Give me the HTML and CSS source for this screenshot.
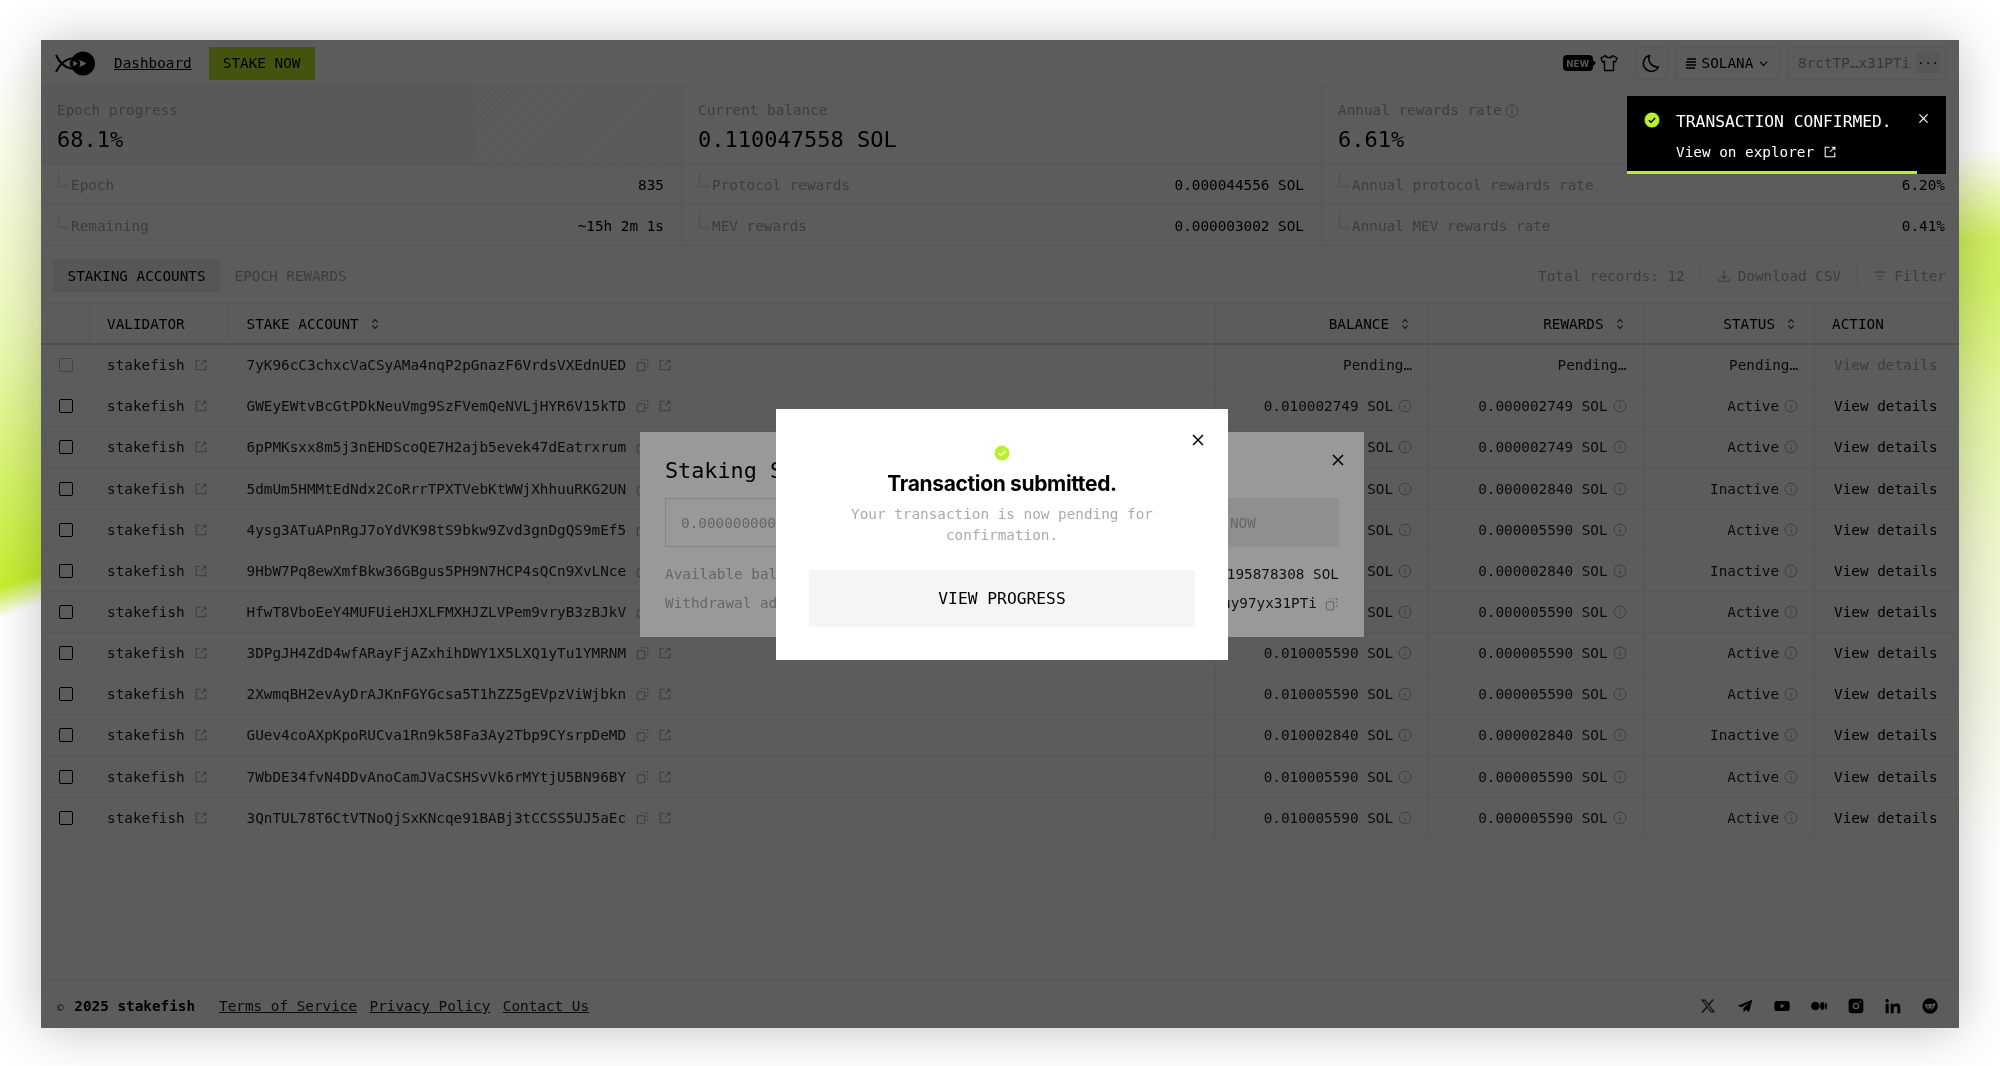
FILE: index.html
```html
<!DOCTYPE html>
<html lang="en">
<head>
<meta charset="utf-8">
<title>stakefish dashboard</title>
<link rel="stylesheet" href="styles.css">
</head>
<body>
<svg class="defs" width="0" height="0" aria-hidden="true">
  <symbol id="ext" viewBox="0 0 16 16"><path d="M7.500 2.500H2.500v11h11V8.500M10 2.500h3.500V6M13.500 2.500 8 8" fill="none" stroke="currentColor" stroke-width="1.200"/></symbol>
  <symbol id="copy" viewBox="0 0 16 16"><rect x="1.500" y="5.500" width="8.500" height="9" rx="1.500" fill="none" stroke="currentColor" stroke-width="1.200"/><path d="M5 2h1.500M8.500 2H10M12 2h1.500v1.500M13.500 5.500V7M13.500 9v1.500H12.500" fill="none" stroke="currentColor" stroke-width="1.200"/></symbol>
  <symbol id="info" viewBox="0 0 16 16"><circle cx="8" cy="8" r="6.700" fill="none" stroke="currentColor" stroke-width="1.100"/><path d="M8 7v4.500M8 4.500v1.200" fill="none" stroke="currentColor" stroke-width="1.100"/></symbol>
  <symbol id="sort" viewBox="0 0 16 16"><path d="M5 6.200 8 3l3 3.200M5 9.800 8 13l3-3.200" fill="none" stroke="currentColor" stroke-width="1.200"/></symbol>
  <symbol id="sub" viewBox="0 0 12 20"><path d="M1.500 1v14.500H10M7.500 12.500l3 3-3 3" fill="none" stroke="currentColor" stroke-width="1"/></symbol>
  <symbol id="close" viewBox="0 0 16 16"><path d="M3 3l10 10M13 3 3 13" fill="none" stroke="currentColor" stroke-width="1.500"/></symbol>
  <symbol id="check" viewBox="0 0 16 16"><circle cx="8" cy="8" r="7.500" fill="#b8f12c"/><path d="M4.800 8.200 7 10.300l4.200-4.400" fill="none" stroke="currentColor" stroke-width="1.400"/></symbol>
</svg>
<div class="stage">
  <div class="window">
    <header class="topbar">
      <svg class="logo" viewBox="0 0 40 25" aria-label="stakefish"><circle cx="28" cy="12.500" r="12"/><path d="M1 21C8 6 21 3.500 33 12.500 21 21.500 8 19 1 4" fill="#fff" stroke="#000" stroke-width="2"/><circle cx="20" cy="12.500" r="5.300"/><path d="M18.300 9.500l4.500 3-4.500 3z" fill="#fff"/></svg>
      <a class="navlink">Dashboard</a>
      <button class="stake">STAKE NOW</button>
      <span class="spring"></span>
      <span class="newtag">NEW</span>
      <svg class="shirt" viewBox="0 0 18 18"><path d="M5.500 1.500 1 4l1.500 4 2-.7V16.500h9V7.300l2 .7L17 4l-4.500-2.500C11.800 4.300 6.200 4.300 5.500 1.500z" fill="none" stroke="#000" stroke-width="1.400" stroke-linejoin="round"/></svg>
      <span class="box moon"><svg viewBox="0 0 20 20" width="20" height="20"><path d="M8.500 2.500A8 8 0 1 0 17.500 14 8.500 8.500 0 0 1 8.500 2.500z" fill="none" stroke="#000" stroke-width="1.500" stroke-linejoin="round"/></svg></span>
      <span class="box network"><svg viewBox="0 0 12 12" width="12" height="12"><path d="M2 2h9M1 5h10M1 8h10M1 11h9" stroke="#000" stroke-width="1.700"/></svg>SOLANA<svg viewBox="0 0 12 12" width="11" height="11"><path d="M2 4l4 4 4-4" fill="none" stroke="#000" stroke-width="1.300"/></svg></span>
      <span class="box wallet"><span class="addr">8rctTP…x31PTi</span><span class="dots">···</span></span>
    </header>

    <section class="stats">
      <div class="stat progress"><div class="hatch"></div><div class="lab">Epoch progress</div><div class="big">68.1%</div></div>
      <div class="stat"><div class="lab">Current balance</div><div class="big">0.110047558 SOL</div></div>
      <div class="stat"><div class="lab">Annual rewards rate<svg class="ic14 labinfo"><use href="#info"/></svg></div><div class="big">6.61%</div></div>

      <div class="sub"><svg class="subic"><use href="#sub"/></svg><span class="sublab">Epoch</span><span>835</span></div>
      <div class="sub"><svg class="subic"><use href="#sub"/></svg><span class="sublab">Protocol rewards</span><span>0.000044556 SOL</span></div>
      <div class="sub last"><svg class="subic"><use href="#sub"/></svg><span class="sublab">Annual protocol rewards rate</span><span>6.20%</span></div>

      <div class="sub"><svg class="subic"><use href="#sub"/></svg><span class="sublab">Remaining</span><span>~15h 2m 1s</span></div>
      <div class="sub"><svg class="subic"><use href="#sub"/></svg><span class="sublab">MEV rewards</span><span>0.000003002 SOL</span></div>
      <div class="sub last"><svg class="subic"><use href="#sub"/></svg><span class="sublab">Annual MEV rewards rate</span><span>0.41%</span></div>
    </section>

    <section class="toolbar">
      <span class="tab on">STAKING ACCOUNTS</span>
      <span class="tab">EPOCH REWARDS</span>
      <span class="spring"></span>
      <span class="tool">Total records: 12</span>
      <span class="tool sep"><svg class="ic14" viewBox="0 0 16 16"><path d="M8 1.500v9M4.500 7.500 8 11l3.500-3.500M2 11v3h12v-3" fill="none" stroke="currentColor" stroke-width="1.300"/></svg>Download CSV</span>
      <span class="tool sep"><svg class="ic14" viewBox="0 0 16 16"><path d="M2 3.500h12M4 8h8M6 12.500h4" fill="none" stroke="currentColor" stroke-width="1.300"/></svg>Filter</span>
    </section>

    <section class="table">
      <div class="row head">
        <div class="c"></div>
        <div class="c">VALIDATOR</div>
        <div class="c">STAKE ACCOUNT <svg class="ic14 sorticon"><use href="#sort"/></svg></div>
        <div class="c r">BALANCE <svg class="ic14 sorticon"><use href="#sort"/></svg></div>
        <div class="c r">REWARDS <svg class="ic14 sorticon"><use href="#sort"/></svg></div>
        <div class="c r">STATUS <svg class="ic14 sorticon"><use href="#sort"/></svg></div>
        <div class="c">ACTION</div>
      </div>
      <div class="row pending">
        <div class="c"><span class="cb"></span></div>
        <div class="c"><span class="val">stakefish</span><svg class="ic14 faint"><use href="#ext"/></svg></div>
        <div class="c"><span class="acct">7yK96cC3chxcVaCSyAMa4nqP2pGnazF6VrdsVXEdnUED</span><svg class="ic14 faint"><use href="#copy"/></svg><svg class="ic14 faint"><use href="#ext"/></svg></div>
        <div class="c r pend">Pending…</div>
        <div class="c r pend">Pending…</div>
        <div class="c r pend">Pending…</div>
        <div class="c act off">View details</div>
      </div>
      <div class="row">
        <div class="c"><span class="cb"></span></div>
        <div class="c"><span class="val">stakefish</span><svg class="ic14 faint"><use href="#ext"/></svg></div>
        <div class="c"><span class="acct">GWEyEWtvBcGtPDkNeuVmg9SzFVemQeNVLjHYR6V15kTD</span><svg class="ic14 faint"><use href="#copy"/></svg><svg class="ic14 faint"><use href="#ext"/></svg></div>
        <div class="c r">0.010002749 SOL<svg class="ic14 faint"><use href="#info"/></svg></div>
        <div class="c r">0.000002749 SOL<svg class="ic14 faint"><use href="#info"/></svg></div>
        <div class="c r">Active<svg class="ic14 faint"><use href="#info"/></svg></div>
        <div class="c act">View details</div>
      </div>
      <div class="row">
        <div class="c"><span class="cb"></span></div>
        <div class="c"><span class="val">stakefish</span><svg class="ic14 faint"><use href="#ext"/></svg></div>
        <div class="c"><span class="acct">6pPMKsxx8m5j3nEHDScoQE7H2ajb5evek47dEatrxrum</span><svg class="ic14 faint"><use href="#copy"/></svg><svg class="ic14 faint"><use href="#ext"/></svg></div>
        <div class="c r">0.010002749 SOL<svg class="ic14 faint"><use href="#info"/></svg></div>
        <div class="c r">0.000002749 SOL<svg class="ic14 faint"><use href="#info"/></svg></div>
        <div class="c r">Active<svg class="ic14 faint"><use href="#info"/></svg></div>
        <div class="c act">View details</div>
      </div>
      <div class="row">
        <div class="c"><span class="cb"></span></div>
        <div class="c"><span class="val">stakefish</span><svg class="ic14 faint"><use href="#ext"/></svg></div>
        <div class="c"><span class="acct">5dmUm5HMMtEdNdx2CoRrrTPXTVebKtWWjXhhuuRKG2UN</span><svg class="ic14 faint"><use href="#copy"/></svg><svg class="ic14 faint"><use href="#ext"/></svg></div>
        <div class="c r">0.010002840 SOL<svg class="ic14 faint"><use href="#info"/></svg></div>
        <div class="c r">0.000002840 SOL<svg class="ic14 faint"><use href="#info"/></svg></div>
        <div class="c r">Inactive<svg class="ic14 faint"><use href="#info"/></svg></div>
        <div class="c act">View details</div>
      </div>
      <div class="row">
        <div class="c"><span class="cb"></span></div>
        <div class="c"><span class="val">stakefish</span><svg class="ic14 faint"><use href="#ext"/></svg></div>
        <div class="c"><span class="acct">4ysg3ATuAPnRgJ7oYdVK98tS9bkw9Zvd3gnDgQS9mEf5</span><svg class="ic14 faint"><use href="#copy"/></svg><svg class="ic14 faint"><use href="#ext"/></svg></div>
        <div class="c r">0.010005590 SOL<svg class="ic14 faint"><use href="#info"/></svg></div>
        <div class="c r">0.000005590 SOL<svg class="ic14 faint"><use href="#info"/></svg></div>
        <div class="c r">Active<svg class="ic14 faint"><use href="#info"/></svg></div>
        <div class="c act">View details</div>
      </div>
      <div class="row">
        <div class="c"><span class="cb"></span></div>
        <div class="c"><span class="val">stakefish</span><svg class="ic14 faint"><use href="#ext"/></svg></div>
        <div class="c"><span class="acct">9HbW7Pq8ewXmfBkw36GBgus5PH9N7HCP4sQCn9XvLNce</span><svg class="ic14 faint"><use href="#copy"/></svg><svg class="ic14 faint"><use href="#ext"/></svg></div>
        <div class="c r">0.010002840 SOL<svg class="ic14 faint"><use href="#info"/></svg></div>
        <div class="c r">0.000002840 SOL<svg class="ic14 faint"><use href="#info"/></svg></div>
        <div class="c r">Inactive<svg class="ic14 faint"><use href="#info"/></svg></div>
        <div class="c act">View details</div>
      </div>
      <div class="row">
        <div class="c"><span class="cb"></span></div>
        <div class="c"><span class="val">stakefish</span><svg class="ic14 faint"><use href="#ext"/></svg></div>
        <div class="c"><span class="acct">HfwT8VboEeY4MUFUieHJXLFMXHJZLVPem9vryB3zBJkV</span><svg class="ic14 faint"><use href="#copy"/></svg><svg class="ic14 faint"><use href="#ext"/></svg></div>
        <div class="c r">0.010005590 SOL<svg class="ic14 faint"><use href="#info"/></svg></div>
        <div class="c r">0.000005590 SOL<svg class="ic14 faint"><use href="#info"/></svg></div>
        <div class="c r">Active<svg class="ic14 faint"><use href="#info"/></svg></div>
        <div class="c act">View details</div>
      </div>
      <div class="row">
        <div class="c"><span class="cb"></span></div>
        <div class="c"><span class="val">stakefish</span><svg class="ic14 faint"><use href="#ext"/></svg></div>
        <div class="c"><span class="acct">3DPgJH4ZdD4wfARayFjAZxhihDWY1X5LXQ1yTu1YMRNM</span><svg class="ic14 faint"><use href="#copy"/></svg><svg class="ic14 faint"><use href="#ext"/></svg></div>
        <div class="c r">0.010005590 SOL<svg class="ic14 faint"><use href="#info"/></svg></div>
        <div class="c r">0.000005590 SOL<svg class="ic14 faint"><use href="#info"/></svg></div>
        <div class="c r">Active<svg class="ic14 faint"><use href="#info"/></svg></div>
        <div class="c act">View details</div>
      </div>
      <div class="row">
        <div class="c"><span class="cb"></span></div>
        <div class="c"><span class="val">stakefish</span><svg class="ic14 faint"><use href="#ext"/></svg></div>
        <div class="c"><span class="acct">2XwmqBH2evAyDrAJKnFGYGcsa5T1hZZ5gEVpzViWjbkn</span><svg class="ic14 faint"><use href="#copy"/></svg><svg class="ic14 faint"><use href="#ext"/></svg></div>
        <div class="c r">0.010005590 SOL<svg class="ic14 faint"><use href="#info"/></svg></div>
        <div class="c r">0.000005590 SOL<svg class="ic14 faint"><use href="#info"/></svg></div>
        <div class="c r">Active<svg class="ic14 faint"><use href="#info"/></svg></div>
        <div class="c act">View details</div>
      </div>
      <div class="row">
        <div class="c"><span class="cb"></span></div>
        <div class="c"><span class="val">stakefish</span><svg class="ic14 faint"><use href="#ext"/></svg></div>
        <div class="c"><span class="acct">GUev4coAXpKpoRUCva1Rn9k58Fa3Ay2Tbp9CYsrpDeMD</span><svg class="ic14 faint"><use href="#copy"/></svg><svg class="ic14 faint"><use href="#ext"/></svg></div>
        <div class="c r">0.010002840 SOL<svg class="ic14 faint"><use href="#info"/></svg></div>
        <div class="c r">0.000002840 SOL<svg class="ic14 faint"><use href="#info"/></svg></div>
        <div class="c r">Inactive<svg class="ic14 faint"><use href="#info"/></svg></div>
        <div class="c act">View details</div>
      </div>
      <div class="row">
        <div class="c"><span class="cb"></span></div>
        <div class="c"><span class="val">stakefish</span><svg class="ic14 faint"><use href="#ext"/></svg></div>
        <div class="c"><span class="acct">7WbDE34fvN4DDvAnoCamJVaCSHSvVk6rMYtjU5BN96BY</span><svg class="ic14 faint"><use href="#copy"/></svg><svg class="ic14 faint"><use href="#ext"/></svg></div>
        <div class="c r">0.010005590 SOL<svg class="ic14 faint"><use href="#info"/></svg></div>
        <div class="c r">0.000005590 SOL<svg class="ic14 faint"><use href="#info"/></svg></div>
        <div class="c r">Active<svg class="ic14 faint"><use href="#info"/></svg></div>
        <div class="c act">View details</div>
      </div>
      <div class="row">
        <div class="c"><span class="cb"></span></div>
        <div class="c"><span class="val">stakefish</span><svg class="ic14 faint"><use href="#ext"/></svg></div>
        <div class="c"><span class="acct">3QnTUL78T6CtVTNoQjSxKNcqe91BABj3tCCSS5UJ5aEc</span><svg class="ic14 faint"><use href="#copy"/></svg><svg class="ic14 faint"><use href="#ext"/></svg></div>
        <div class="c r">0.010005590 SOL<svg class="ic14 faint"><use href="#info"/></svg></div>
        <div class="c r">0.000005590 SOL<svg class="ic14 faint"><use href="#info"/></svg></div>
        <div class="c r">Active<svg class="ic14 faint"><use href="#info"/></svg></div>
        <div class="c act">View details</div>
      </div>
    </section>

    <footer class="foot">
      <span class="copyr"><span class="cmark">©</span> 2025 stakefish</span>
      <a class="flink first">Terms of Service</a>
      <a class="flink">Privacy Policy</a>
      <a class="flink">Contact Us</a>
      <span class="spring"></span>
      <div class="social">
        <svg class="xlogo" viewBox="0 0 24 24"><path d="M18.244 2.250h3.308l-7.227 8.260 8.502 11.240H16.170l-5.214-6.817L4.990 21.750H1.680l7.730-8.835L1.254 2.250H8.080l4.713 6.231zm-1.161 17.520h1.833L7.084 4.126H5.117z"/></svg>
        <svg viewBox="0 0 24 24"><path d="M23 2.500 1 11.500l6 2.500 11-7.500-8.500 9 .5 6 3.500-4 4.500 3.500z"/></svg>
        <svg viewBox="0 0 24 24"><path d="M4 4.500h16a3.500 3.500 0 0 1 3.500 3.500v8a3.500 3.500 0 0 1-3.500 3.500H4A3.500 3.500 0 0 1 .5 16V8A3.500 3.500 0 0 1 4 4.500zM10 8.500v7l6-3.500z" fill-rule="evenodd"/></svg>
        <svg viewBox="0 0 24 24"><circle cx="6.500" cy="12" r="6.500"/><ellipse cx="17" cy="12" rx="3.200" ry="6"/><ellipse cx="22.500" cy="12" rx="1.300" ry="5.400"/></svg>
        <svg viewBox="0 0 24 24"><path d="M6 1h12a5 5 0 0 1 5 5v12a5 5 0 0 1-5 5H6a5 5 0 0 1-5-5V6a5 5 0 0 1 5-5zM12 7a5 5 0 1 0 0 10 5 5 0 0 0 0-10zm0 2a3 3 0 1 1 0 6 3 3 0 0 1 0-6zm6.500-4.500a1.300 1.300 0 1 0 0 2.600 1.300 1.300 0 0 0 0-2.600z" fill-rule="evenodd"/></svg>
        <svg viewBox="0 0 24 24"><path d="M1 8.500h4.500V23H1zM3.250 1.500a2.600 2.600 0 1 1 0 5.200 2.600 2.600 0 0 1 0-5.200zM8.500 8.500h4.300v2c.7-1.300 2.300-2.400 4.700-2.400 4.600 0 5.500 3 5.500 7V23h-4.500v-7c0-1.700 0-3.800-2.300-3.800S13 14 13 15.900V23H8.500z"/></svg>
        <svg viewBox="0 0 24 24"><path d="M12 .5a11.500 11.500 0 1 0 0 23 11.500 11.500 0 0 0 0-23zM5 10.500a2 2 0 0 1 3-.8C9.200 9 10.500 8.700 12 8.700s2.800.3 4 1a2 2 0 1 1 3 1.700c.1 3.500-3 6-7 6s-7.100-2.500-7-6a2 2 0 0 1-2-.9zM9 11.500a1.300 1.300 0 1 0 0 2.600 1.300 1.300 0 0 0 0-2.600zm6 0a1.300 1.300 0 1 0 0 2.600 1.300 1.300 0 0 0 0-2.600zM8.800 15c1.800 1.400 4.600 1.400 6.400 0z" fill-rule="evenodd"/></svg>
      </div>
    </footer>

    <div class="scrim">
      <div class="dialog">
        <div class="dhead"><span class="dtitle">Staking SOL</span><svg class="x dx"><use href="#close"/></svg></div>
        <div class="dinput"><span class="ph">0.000000000</span><span class="dbtn">STAKE NOW</span></div>
        <div class="dline"><span>Available balance</span><span>0.195878308 SOL</span></div>
        <div class="dline"><span>Withdrawal address</span><span class="dadr">8rctTP…uy97yx31PTi<svg class="ic14 faint"><use href="#copy"/></svg></span></div>
      </div>
    </div>

    <div class="scrim">
      <div class="confirm">
        <svg class="x cx"><use href="#close"/></svg>
        <svg class="okmark"><use href="#check"/></svg>
        <h2 class="ctitle">Transaction submitted.</h2>
        <p class="ctext">Your transaction is now pending for confirmation.</p>
        <button class="cbtn">VIEW PROGRESS</button>
      </div>
    </div>

    <div class="toast">
      <svg class="tcheck"><use href="#check"/></svg>
      <div class="tbody">
        <div class="ttitle">TRANSACTION CONFIRMED.</div>
        <div class="tlink">View on explorer <svg class="ic14"><use href="#ext"/></svg></div>
      </div>
      <svg class="tclose"><use href="#close"/></svg>
      <div class="tbar"></div>
    </div>
  </div>
</div>
</body>
</html>
```

FILE: styles.css
```css
* { box-sizing: border-box; }
html, body { margin: 0; height: 1066px; overflow: hidden; }
body {
  background-color: #fff;
  background-image:
    linear-gradient(159.5deg, rgba(198,239,48,0) 60px, rgba(198,239,48,.35) 320px, #c6ef30 551px, rgba(198,239,48,0) 579px),
    linear-gradient(180deg, rgba(210,240,96,0) 150px, #d2f060 240px, #d4f268 290px, #e4f8a0 400px, #eff8cf 550px, #f5f8e5 700px, rgba(245,248,229,0) 850px);
  background-size: 60px 700px, 60px 1066px;
  background-position: 0 0, 100% 0;
  background-repeat: no-repeat;
  font-family: "DejaVu Sans Mono", monospace;
  font-size: 14.33px;
  color: #000;
}
.defs { display: block; height: 0; }
.stage {
  padding: 40px 41px 38px; height: 1066px;
  filter: drop-shadow(0 2px 26px rgba(0,0,0,.24));
}
.window {
  position: relative;
  height: 988px;
  background: #fff;
  display: flex;
  flex-direction: column;
  overflow: hidden;
}

.spring { flex: 1; }
.ic14 { width: 14px; height: 14px; flex: none; vertical-align: -2px; }
.faint { color: #a8a8a8; }

/* top bar */
.topbar {
  height: 47px; flex: none;
  display: flex; align-items: center;
  padding: 0 13px 0 14px;
  border-bottom: 1px solid #eee;
}
.logo { width: 40px; height: 25px; flex: none; }
.navlink { margin-left: 19px; text-decoration: underline; }
.stake {
  margin-left: 17px; width: 106px; height: 33px;
  background: #bdea2a; border: 0; padding: 0;
  font: inherit; color: #000;
}
.newtag {
  position: relative;
  background: #000; color: #fff; border-radius: 4px;
  width: 30px; height: 16px;
  font-family: Inter, sans-serif; font-weight: 700; font-size: 9px;
  display: flex; align-items: center; justify-content: center; letter-spacing: .5px;
}
.newtag::after {
  content: ""; position: absolute; right: -3px; top: 5px;
  border-left: 3px solid #000; border-top: 3px solid transparent; border-bottom: 3px solid transparent;
}
.shirt { width: 18px; height: 18px; margin-left: 7px; }
.box {
  height: 33px; border: 1px solid #eee;
  display: flex; align-items: center; justify-content: center;
}
.moon { width: 33px; margin-left: 16px; }
.network { width: 104px; margin-left: 8px; gap: 5px; }
.wallet { width: 159px; margin-left: 8px; padding: 0 5px 0 10px; justify-content: space-between; }
.addr { color: #999; }
.dots { width: 24px; height: 20px; background: #f3f3f3; display: flex; align-items: center; justify-content: center; font-size: 12px; }

/* stats */
.stats {
  display: grid; flex: none;
  grid-template-columns: 641px 640px 1fr;
  grid-template-rows: 78px 40px 41px;
}
.stat {
  position: relative; padding: 13px 16px 0;
  border-right: 1px solid #eee; border-bottom: 1px solid #eee;
}
.stat:nth-child(3) { border-right: 0; }
.stat.progress { background: #f8f8f8; }
.hatch {
  position: absolute; left: 435px; top: 0; bottom: 0; right: 0;
  background: repeating-linear-gradient(135deg, #f2f2f2 0 1px, #fff 1px 4px);
}
.lab { position: relative; color: #aaa; line-height: 21px; display: flex; align-items: center; gap: 3px; }
.labinfo { color: #aaa; }
.big { position: relative; font-size: 22px; line-height: 28px; margin-top: 5px; }
.sub {
  display: flex; align-items: center;
  padding: 1px 17px 0 16px;
  border-right: 1px solid #eee; border-bottom: 1px solid #eee;
}
.sub.last { border-right: 0; padding-right: 14px; }
.subic { width: 12px; height: 20px; color: #ddd; margin-right: 2px; margin-top: -8px; flex: none; }
.sublab { flex: 1; color: #aaa; }

/* toolbar */
.toolbar {
  height: 57px; flex: none;
  display: flex; align-items: center;
  padding: 2px 13px 0 12px;
}
.tab { height: 33px; padding: 0 14.500px; display: flex; align-items: center; color: #aaa; }
.tab.on { background: #f0f0f0; color: #000; }
.tool { color: #aaa; display: flex; align-items: center; gap: 7px; }
.tool.sep { margin-left: 15px; padding-left: 16px; border-left: 1px solid #eee; height: 21px; }

/* table */
.table { flex: 1; border-top: 1px solid #eee; }
.row {
  display: grid;
  grid-template-columns: 49px 139.500px 986.300px 213.300px 214.500px 171.500px 1fr;
  height: 41.160px;
  border-bottom: 1px solid #eee;
}
.row.head { height: 41px; border-bottom: 2px solid #ddd; }
.c {
  display: flex; align-items: center; gap: 5px;
  padding: 0 16px 0 17px;
  white-space: nowrap;
  color: #222;
}
.head .c { color: #000; gap: 4px; }
.row.head .c { border-right: 1px solid #eee; }
.row.head .c:last-child { border-right: 0; }
.row .c:nth-child(3),.row .c:nth-child(4),.row .c:nth-child(5),.row .c:nth-child(6) { border-right: 1px solid #eee; }
.c.r { justify-content: flex-end; }
.sorticon { color: #333; margin-left: 5px; }
.c:first-child { padding: 0 0 0 18px; }
.cb { width: 14px; height: 14px; border: 1.500px solid #000; border-radius: 2px; }
.pending .cb { border-color: #bbb; }
.val { margin-right: 4px; }
.acct { margin-right: 5px; }
.acct + svg { margin-right: 3px; }
.act { padding-left: 19px; color: #000; }
.act.off { color: #aaa; }

/* footer */
.foot {
  height: 48px; flex: none;
  border-top: 1px solid #eee;
  display: flex; align-items: center;
  padding: 3px 21px 0 16px;
}
.copyr { font-weight: 700; }
.cmark { font-weight: 400; font-size: 11px; color: #333; margin-right: 2px; }
.flink { text-decoration: underline; margin-left: 12.500px; color: #222; }
.flink.first { margin-left: 24px; }
.social { display: flex; gap: 21px; }
.social svg { width: 16px; height: 16px; }
.social .xlogo { opacity: .75; }

/* dialogs */
.scrim {
  position: absolute; inset: 0;
  background: rgba(0,0,0,.4);
  display: flex; align-items: center; justify-content: center;
  padding: 1px 0 0 4px;
}
.dialog { width: 724px; height: 205px; background: #fff; padding: 23px 25px 0; }
.dhead { display: flex; justify-content: space-between; align-items: center; height: 30px; }
.dtitle { font-size: 21.800px; }
.x { width: 16px; height: 16px; }
.dx { margin: -21px -7px 0 0; }
.dinput {
  margin-top: 13px; height: 49px; display: flex;
  align-items: center; justify-content: space-between;
}
.ph { flex: 1; height: 49px; border: 1px solid #ddd; display: flex; align-items: center; padding: 0 15px; color: #aaa; }
.dbtn { width: 244px; height: 49px; background: #eee; color: #aaa; display: flex; align-items: center; justify-content: center; }
.dline { display: flex; justify-content: space-between; margin-top: 8px; line-height: 21px; color: #222; }
.dline span:first-child { color: #aaa; }
.dinput + .dline { margin-top: 17px; }
.dadr { display: flex; align-items: center; gap: 8px; }

.confirm {
  position: relative;
  width: 452px; height: 251px; background: #fff;
  display: flex; flex-direction: column; align-items: center;
  padding-top: 36px;
}
.cx { position: absolute; right: 22px; top: 23px; }
.okmark { width: 16px; height: 16px; color: #fff; flex: none; }
.ctitle {
  margin: 9px 0 0; font-family: Inter, sans-serif; font-weight: 700;
  font-size: 21px; line-height: 28px; color: #000; letter-spacing: -.35px;
}
.ctext { margin: 6px 0 0; width: 320px; text-align: center; color: #aaa; line-height: 21px; }
.cbtn {
  margin-top: 24px; width: 386px; height: 57px;
  background: #f5f5f5; border: 0; padding: 0;
  font: inherit; font-size: 16.300px; color: #000;
}

/* toast */
.toast {
  position: absolute; top: 56px; right: 13px;
  width: 319px; height: 78px;
  background: #000; color: #fff;
  display: flex; padding: 16px 16px 0 17px;
}
.tcheck { width: 16px; height: 16px; color: #000; flex: none; }
.tbody { flex: 1; margin-left: 16px; }
.ttitle { font-size: 16.300px; line-height: 20px; }
.tlink { margin-top: 10px; line-height: 20px; }
.tclose { width: 13px; height: 13px; }
.tbar { position: absolute; left: 0; bottom: 0; width: 290px; height: 3px; background: #b8f12c; }
```
